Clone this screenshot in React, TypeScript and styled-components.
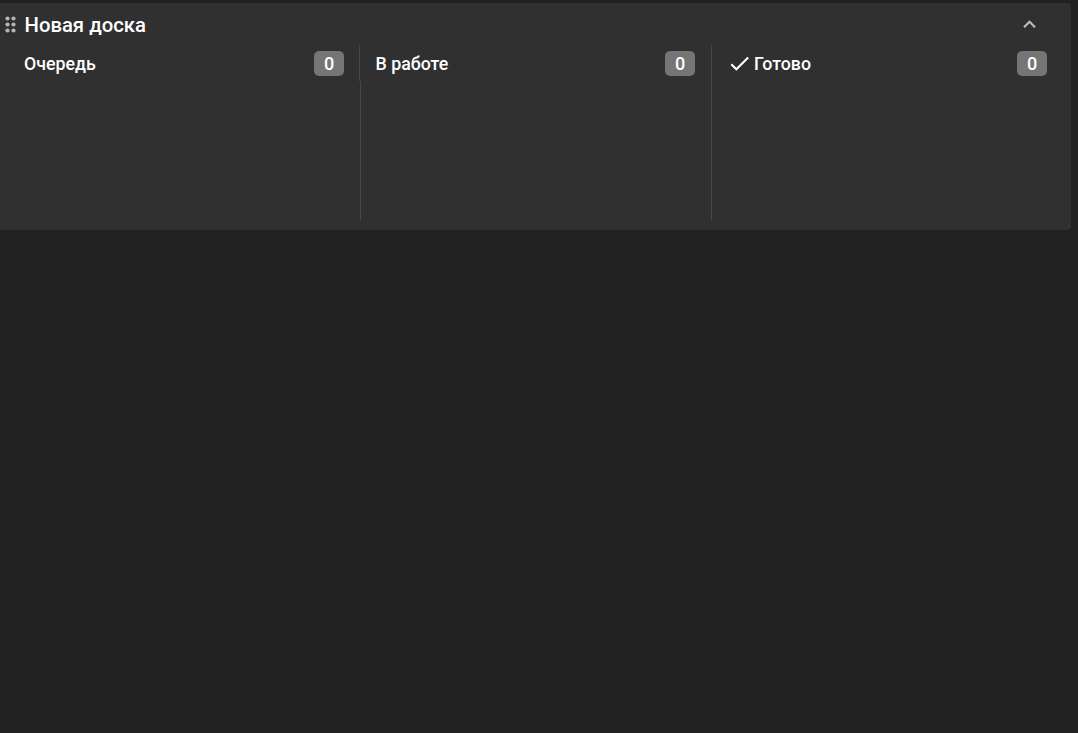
import React from "react";
import styled, { createGlobalStyle } from "styled-components";

const Global = createGlobalStyle`
  html, body { margin: 0; padding: 0; background: #212121; height: 100%; overflow: hidden; }
  body { font-family: Roboto, "Liberation Sans", sans-serif; color: #fff; }
`;

const Page = styled.div`
  height: 733px;
  padding: 3px 7px 0 0;
  box-sizing: border-box;
`;

const Board = styled.section`
  height: 227px;
  background: #303030;
  border-radius: 0 4px 4px 0;
  box-sizing: border-box;
  padding-left: 8px;
  padding-right: 8px;
`;

const BoardHeader = styled.header`
  height: 42px;
  display: flex;
  align-items: center;
  position: relative;
`;

const Grip = styled.svg`
  position: absolute;
  left: -3px;
  top: 13px;
  width: 11px;
  height: 17px;
  fill: #b5b5b5;
`;

const Title = styled.h2`
  margin: 2px 0 0 16.5px;
  font-size: 20.3px;
  font-weight: 500;
  line-height: 24px;
  flex: 1;
`;

const Collapse = styled.button`
  width: 25px;
  height: 25px;
  margin-right: 21px;
  padding: 0;
  border: 0;
  background: none;
  color: #bdbdbd;
  display: flex;
  align-items: center;
  justify-content: center;
`;

const Columns = styled.div`
  display: grid;
  grid-template-columns: 352px 352px 351px;
`;

const Column = styled.div`
  display: flex;
  flex-direction: column;
`;

const ColumnHeader = styled.div<{ $divider: boolean; $left: number; $right: number }>`
  height: 36px;
  box-sizing: border-box;
  display: flex;
  align-items: center;
  padding: 0 ${(p) => p.$right}px 0 ${(p) => p.$left}px;
  border-right: ${(p) => (p.$divider ? "1px solid #484848" : "none")};
`;

const ColumnBody = styled.div<{ $divider: boolean; $nudge: boolean }>`
  height: 139px;
  box-sizing: border-box;
  border-right: ${(p) => (p.$divider ? "1px solid #484848" : "none")};
  margin-right: ${(p) => (p.$nudge ? "-1px" : "0")};
`;

const ColumnName = styled.span`
  flex: 1;
  display: flex;
  align-items: center;
  font-size: 17.8px;
  font-weight: 500;
  line-height: 24px;
  padding-top: 1px;
`;

const DoneIcon = styled.svg`
  width: 25px;
  height: 25px;
  margin: -1px 2px 0 0;
  fill: #fff;
`;

const Count = styled.span`
  width: 30px;
  height: 25px;
  border-radius: 5px;
  background: #757575;
  color: #fff;
  font-size: 18px;
  font-weight: 500;
  display: flex;
  align-items: center;
  justify-content: center;
`;

const columns = [
  { name: "Очередь", done: false, divider: true, nudge: true, left: 16, right: 15 },
  { name: "В работе", done: false, divider: true, nudge: false, left: 15.5, right: 16 },
  { name: "Готово", done: true, divider: false, nudge: false, left: 15, right: 16 },
];

export default function App() {
  return (
    <>
      <Global />
      <Page>
        <Board>
          <BoardHeader>
            <Grip viewBox="0 0 11 17">
              {[2.5, 8.5, 14.5].flatMap((cy) =>
                [2.5, 8.5].map((cx) => <circle key={`${cx}-${cy}`} cx={cx} cy={cy} r={2.1} />)
              )}
            </Grip>
            <Title>Новая доска</Title>
            <Collapse aria-label="Свернуть">
              <svg width="25" height="25" viewBox="0 0 24 24" fill="currentColor">
                <path d="M12 8l-6 6 1.41 1.41L12 10.83l4.59 4.58L18 14z" />
              </svg>
            </Collapse>
          </BoardHeader>
          <Columns>
            {columns.map((c) => (
              <Column key={c.name}>
                <ColumnHeader $divider={c.divider} $left={c.left} $right={c.right}>
                  <ColumnName>
                    {c.done && (
                      <DoneIcon viewBox="0 0 24 24">
                        <path d="M9 16.17 4.83 12l-1.42 1.41L9 19 21 7l-1.41-1.41z" />
                      </DoneIcon>
                    )}
                    {c.name}
                  </ColumnName>
                  <Count>0</Count>
                </ColumnHeader>
                <ColumnBody $divider={c.divider} $nudge={c.nudge} />
              </Column>
            ))}
          </Columns>
        </Board>
      </Page>
    </>
  );
}
